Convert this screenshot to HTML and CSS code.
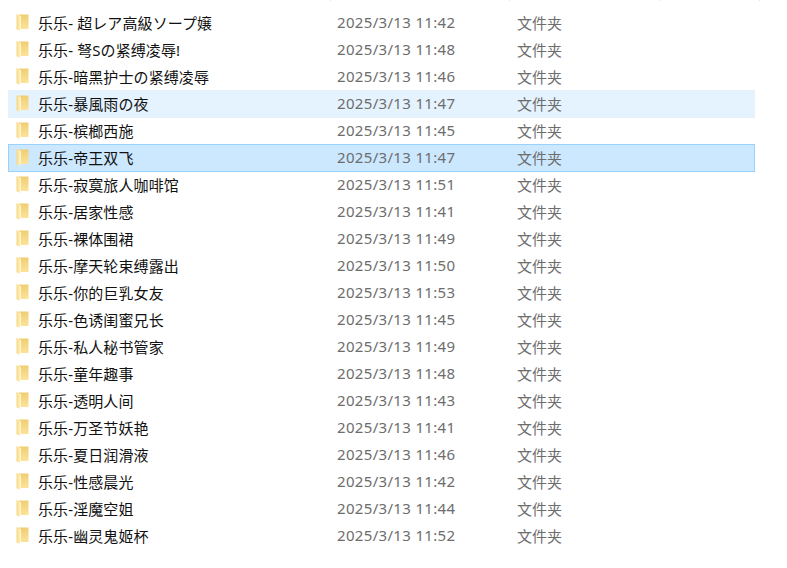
FILE: index.html
```html
<!DOCTYPE html>
<html lang="zh-CN">
<head>
<meta charset="utf-8">
<title>文件列表</title>
<link rel="stylesheet" href="styles.css">
</head>
<body>
<svg class="defs" width="0" height="0" aria-hidden="true">
  <defs>
    <linearGradient id="fg" x1="0" y1="0" x2="0" y2="1">
      <stop offset="0" stop-color="#f0cd72"/>
      <stop offset="1" stop-color="#fce39a"/>
    </linearGradient>
    <linearGradient id="fl" x1="0" y1="0" x2="1" y2="0">
      <stop offset="0" stop-color="#f6d67e"/>
      <stop offset="1" stop-color="#fff0bf"/>
    </linearGradient>
    <symbol id="folder" viewBox="0 0 13 17">
      <path d="M3 0.500h9.500v14.500H3z" fill="url(#fg)"/>
      <path d="M0.500 0l3.500 1.500v15.500l-3.500-1.700z" fill="url(#fl)"/>
      <path d="M4 2v13h1V2z" fill="#fff3c8"/>
    </symbol>
  </defs>
</svg>
<div class="ticks">
  <span class="tick t1"></span><span class="tick t2"></span><span class="tick t3"></span><span class="tick t4"></span>
</div>
<main class="list">
  <div class="row"><svg class="ic"><use href="#folder"/></svg><span class="name">乐乐- 超レア高級ソープ嬢</span><span class="date">2025/3/13 11:42</span><span class="type">文件夹</span></div>
  <div class="row"><svg class="ic"><use href="#folder"/></svg><span class="name">乐乐- 弩Sの紧缚凌辱!</span><span class="date">2025/3/13 11:48</span><span class="type">文件夹</span></div>
  <div class="row"><svg class="ic"><use href="#folder"/></svg><span class="name">乐乐-暗黑护士の紧缚凌辱</span><span class="date">2025/3/13 11:46</span><span class="type">文件夹</span></div>
  <div class="row hover"><svg class="ic"><use href="#folder"/></svg><span class="name">乐乐-暴風雨の夜</span><span class="date">2025/3/13 11:47</span><span class="type">文件夹</span></div>
  <div class="row"><svg class="ic"><use href="#folder"/></svg><span class="name">乐乐-槟榔西施</span><span class="date">2025/3/13 11:45</span><span class="type">文件夹</span></div>
  <div class="row selected"><svg class="ic"><use href="#folder"/></svg><span class="name">乐乐-帝王双飞</span><span class="date">2025/3/13 11:47</span><span class="type">文件夹</span></div>
  <div class="row"><svg class="ic"><use href="#folder"/></svg><span class="name">乐乐-寂寞旅人咖啡馆</span><span class="date">2025/3/13 11:51</span><span class="type">文件夹</span></div>
  <div class="row"><svg class="ic"><use href="#folder"/></svg><span class="name">乐乐-居家性感</span><span class="date">2025/3/13 11:41</span><span class="type">文件夹</span></div>
  <div class="row"><svg class="ic"><use href="#folder"/></svg><span class="name">乐乐-裸体围裙</span><span class="date">2025/3/13 11:49</span><span class="type">文件夹</span></div>
  <div class="row"><svg class="ic"><use href="#folder"/></svg><span class="name">乐乐-摩天轮束缚露出</span><span class="date">2025/3/13 11:50</span><span class="type">文件夹</span></div>
  <div class="row"><svg class="ic"><use href="#folder"/></svg><span class="name">乐乐-你的巨乳女友</span><span class="date">2025/3/13 11:53</span><span class="type">文件夹</span></div>
  <div class="row"><svg class="ic"><use href="#folder"/></svg><span class="name">乐乐-色诱闺蜜兄长</span><span class="date">2025/3/13 11:45</span><span class="type">文件夹</span></div>
  <div class="row"><svg class="ic"><use href="#folder"/></svg><span class="name">乐乐-私人秘书管家</span><span class="date">2025/3/13 11:49</span><span class="type">文件夹</span></div>
  <div class="row"><svg class="ic"><use href="#folder"/></svg><span class="name">乐乐-童年趣事</span><span class="date">2025/3/13 11:48</span><span class="type">文件夹</span></div>
  <div class="row"><svg class="ic"><use href="#folder"/></svg><span class="name">乐乐-透明人间</span><span class="date">2025/3/13 11:43</span><span class="type">文件夹</span></div>
  <div class="row"><svg class="ic"><use href="#folder"/></svg><span class="name">乐乐-万圣节妖艳</span><span class="date">2025/3/13 11:41</span><span class="type">文件夹</span></div>
  <div class="row"><svg class="ic"><use href="#folder"/></svg><span class="name">乐乐-夏日润滑液</span><span class="date">2025/3/13 11:46</span><span class="type">文件夹</span></div>
  <div class="row"><svg class="ic"><use href="#folder"/></svg><span class="name">乐乐-性感晨光</span><span class="date">2025/3/13 11:42</span><span class="type">文件夹</span></div>
  <div class="row"><svg class="ic"><use href="#folder"/></svg><span class="name">乐乐-淫魔空姐</span><span class="date">2025/3/13 11:44</span><span class="type">文件夹</span></div>
  <div class="row"><svg class="ic"><use href="#folder"/></svg><span class="name">乐乐-幽灵鬼姬杯</span><span class="date">2025/3/13 11:52</span><span class="type">文件夹</span></div>
</main>
</body>
</html>
```
FILE: styles.css
```css
html, body {
  margin: 0;
  padding: 0;
  background: #fff;
  overflow: hidden;
}
body {
  width: 787px;
  height: 568px;
  position: relative;
  font-family: "Noto Sans", "Noto Sans CJK SC", sans-serif;
  font-size: 15px;
}
.defs {
  position: absolute;
}
.ticks {
  position: absolute;
  top: 0;
  left: 0;
}
.tick {
  position: absolute;
  top: 0;
  width: 1px;
  height: 1px;
  background: #e5e5e5;
}
.t1 { left: 330px; }
.t2 { left: 509px; }
.t3 { left: 659px; }
.t4 { left: 759px; }
.list {
  margin: 9px 0 0 8px;
  width: 747px;
}
.row {
  box-sizing: border-box;
  height: 28px;
  margin-bottom: -1px;
  padding-bottom: 2px;
  display: flex;
  align-items: center;
}
.hover { background: #e5f3ff; }
.selected {
  background: #cce8ff;
  outline: 1px solid #99d1ff;
  outline-offset: -1px;
}
.ic {
  width: 13px;
  height: 17px;
  margin-left: 8px;
  margin-right: 9px;
  flex: none;
}
.name {
  width: 299px;
  color: #111;
  letter-spacing: 0.1px;
  white-space: nowrap;
}
.date {
  width: 180px;
  color: #6d6d6d;
  letter-spacing: 0.33px;
  white-space: nowrap;
}
.type {
  color: #6d6d6d;
  white-space: nowrap;
}
```
